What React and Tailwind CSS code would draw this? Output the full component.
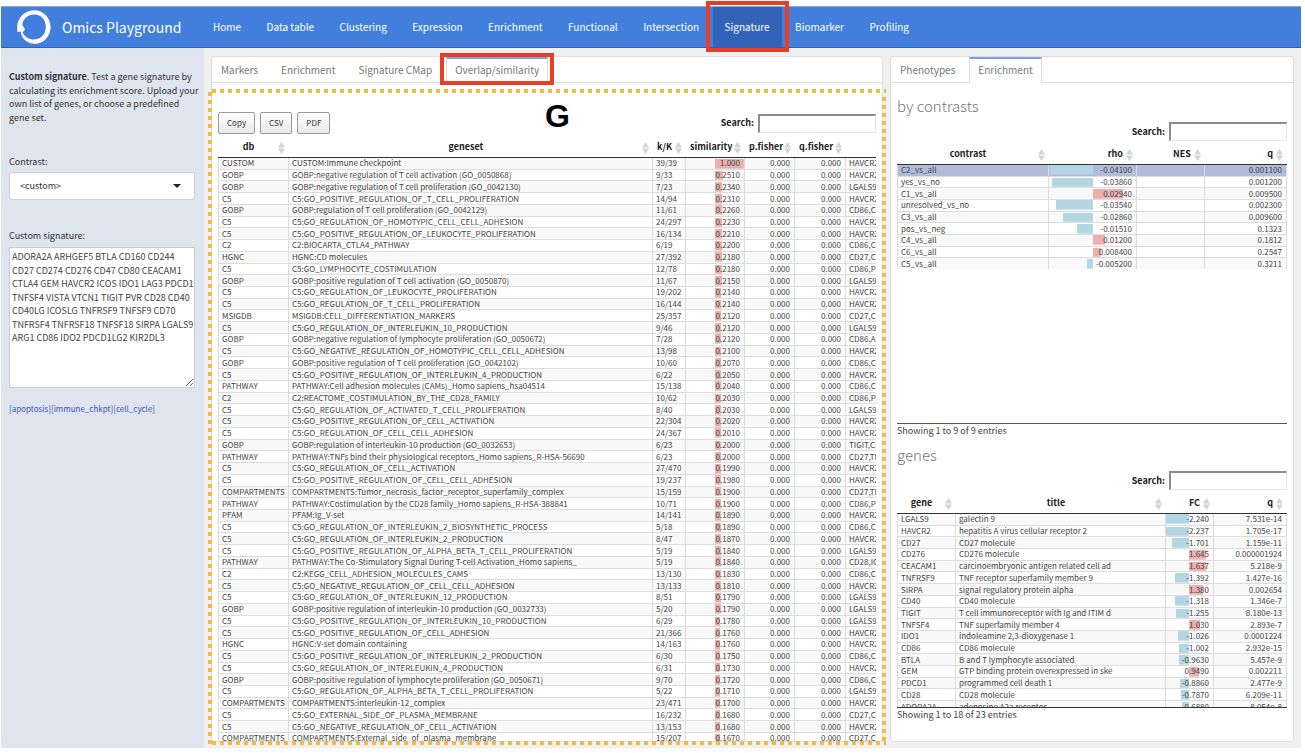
import React from "react";

const NAV = ["Home", "Data table", "Clustering", "Expression", "Enrichment", "Functional", "Intersection", "Signature", "Biomarker", "Profiling"];

const GENESETS = `CUSTOM|CUSTOM:Immune checkpoint|39/39|1.000|HAVCR2
GOBP|GOBP:negative regulation of T cell activation (GO_0050868)|9/33|0.2510|HAVCR2
GOBP|GOBP:negative regulation of T cell proliferation (GO_0042130)|7/23|0.2340|LGALS9
C5|C5:GO_POSITIVE_REGULATION_OF_T_CELL_PROLIFERATION|14/94|0.2310|HAVCR2
GOBP|GOBP:regulation of T cell proliferation (GO_0042129)|11/61|0.2260|CD86,C
C5|C5:GO_REGULATION_OF_HOMOTYPIC_CELL_CELL_ADHESION|24/297|0.2230|HAVCR2
C5|C5:GO_POSITIVE_REGULATION_OF_LEUKOCYTE_PROLIFERATION|16/134|0.2210|HAVCR2
C2|C2:BIOCARTA_CTLA4_PATHWAY|6/19|0.2200|CD86,C
HGNC|HGNC:CD molecules|27/392|0.2180|CD27,C
C5|C5:GO_LYMPHOCYTE_COSTIMULATION|12/78|0.2180|CD86,P
GOBP|GOBP:positive regulation of T cell activation (GO_0050870)|11/67|0.2150|LGALS9
C5|C5:GO_REGULATION_OF_LEUKOCYTE_PROLIFERATION|19/202|0.2140|HAVCR2
C5|C5:GO_REGULATION_OF_T_CELL_PROLIFERATION|16/144|0.2140|HAVCR2
MSIGDB|MSIGDB:CELL_DIFFERENTIATION_MARKERS|25/357|0.2120|CD27,C
C5|C5:GO_REGULATION_OF_INTERLEUKIN_10_PRODUCTION|9/46|0.2120|LGALS9
GOBP|GOBP:negative regulation of lymphocyte proliferation (GO_0050672)|7/28|0.2120|CD86,A
C5|C5:GO_NEGATIVE_REGULATION_OF_HOMOTYPIC_CELL_CELL_ADHESION|13/98|0.2100|HAVCR2
GOBP|GOBP:positive regulation of T cell proliferation (GO_0042102)|10/60|0.2070|CD86,C
C5|C5:GO_POSITIVE_REGULATION_OF_INTERLEUKIN_4_PRODUCTION|6/22|0.2050|HAVCR2
PATHWAY|PATHWAY:Cell adhesion molecules (CAMs)_Homo sapiens_hsa04514|15/138|0.2040|CD86,C
C2|C2:REACTOME_COSTIMULATION_BY_THE_CD28_FAMILY|10/62|0.2030|CD86,P
C5|C5:GO_REGULATION_OF_ACTIVATED_T_CELL_PROLIFERATION|8/40|0.2030|LGALS9
C5|C5:GO_POSITIVE_REGULATION_OF_CELL_ACTIVATION|22/304|0.2020|HAVCR2
C5|C5:GO_REGULATION_OF_CELL_CELL_ADHESION|24/367|0.2010|HAVCR2
GOBP|GOBP:regulation of interleukin-10 production (GO_0032653)|6/23|0.2000|TIGIT,CD
PATHWAY|PATHWAY:TNFs bind their physiological receptors_Homo sapiens_R-HSA-56690|6/23|0.2000|CD27,TN
C5|C5:GO_REGULATION_OF_CELL_ACTIVATION|27/470|0.1990|HAVCR2
C5|C5:GO_POSITIVE_REGULATION_OF_CELL_CELL_ADHESION|19/237|0.1980|HAVCR2
COMPARTMENTS|COMPARTMENTS:Tumor_necrosis_factor_receptor_superfamily_complex|15/159|0.1900|CD27,TN
PATHWAY|PATHWAY:Costimulation by the CD28 family_Homo sapiens_R-HSA-388841|10/71|0.1900|CD86,P
PFAM|PFAM:Ig_V-set|14/141|0.1890|HAVCR2
C5|C5:GO_REGULATION_OF_INTERLEUKIN_2_BIOSYNTHETIC_PROCESS|5/18|0.1890|CD86,C
C5|C5:GO_REGULATION_OF_INTERLEUKIN_2_PRODUCTION|8/47|0.1870|HAVCR2
C5|C5:GO_POSITIVE_REGULATION_OF_ALPHA_BETA_T_CELL_PROLIFERATION|5/19|0.1840|LGALS9
PATHWAY|PATHWAY:The Co-Stimulatory Signal During T-cell Activation_Homo sapiens_|5/19|0.1840|CD28,IC
C2|C2:KEGG_CELL_ADHESION_MOLECULES_CAMS|13/130|0.1830|CD86,C
C5|C5:GO_NEGATIVE_REGULATION_OF_CELL_CELL_ADHESION|13/133|0.1810|HAVCR2
C5|C5:GO_REGULATION_OF_INTERLEUKIN_12_PRODUCTION|8/51|0.1790|LGALS9
GOBP|GOBP:positive regulation of interleukin-10 production (GO_0032733)|5/20|0.1790|LGALS9
C5|C5:GO_POSITIVE_REGULATION_OF_INTERLEUKIN_10_PRODUCTION|6/29|0.1780|LGALS9
C5|C5:GO_POSITIVE_REGULATION_OF_CELL_ADHESION|21/366|0.1760|HAVCR2
HGNC|HGNC:V-set domain containing|14/163|0.1760|HAVCR2
C5|C5:GO_POSITIVE_REGULATION_OF_INTERLEUKIN_2_PRODUCTION|6/30|0.1750|CD86,C
C5|C5:GO_REGULATION_OF_INTERLEUKIN_4_PRODUCTION|6/31|0.1730|HAVCR2
GOBP|GOBP:positive regulation of lymphocyte proliferation (GO_0050671)|9/70|0.1720|CD86,C
C5|C5:GO_REGULATION_OF_ALPHA_BETA_T_CELL_PROLIFERATION|5/22|0.1710|LGALS9
COMPARTMENTS|COMPARTMENTS:interleukin-12_complex|23/471|0.1700|HAVCR2
C5|C5:GO_EXTERNAL_SIDE_OF_PLASMA_MEMBRANE|16/232|0.1680|CD27,C
C5|C5:GO_NEGATIVE_REGULATION_OF_CELL_ACTIVATION|13/153|0.1680|HAVCR2
COMPARTMENTS|COMPARTMENTS:External_side_of_plasma_membrane|15/207|0.1670|CD27,C`
  .split("\n")
  .map((line) => {
    const [db, set, ratio, sim, genes] = line.split("|");
    return [db, set, ratio, sim, "0.000", "0.000", genes];
  });

const CONTRASTS = [
  ["C2_vs_all", "-0.04100", "", "0.001100"],
  ["yes_vs_no", "-0.03860", "", "0.001200"],
  ["C1_vs_all", "0.02940", "", "0.009500"],
  ["unresolved_vs_no", "-0.03540", "", "0.002300"],
  ["C3_vs_all", "-0.02860", "", "0.009600"],
  ["pos_vs_neg", "-0.01510", "", "0.1323"],
  ["C4_vs_all", "0.01200", "", "0.1812"],
  ["C6_vs_all", "0.008400", "", "0.2547"],
  ["C5_vs_all", "-0.005200", "", "0.3211"],
];

const GENES = [
  ["LGALS9", "galectin 9", "-2.240", "7.531e-14"],
  ["HAVCR2", "hepatitis A virus cellular receptor 2", "-2.237", "1.705e-17"],
  ["CD27", "CD27 molecule", "-1.701", "1.159e-11"],
  ["CD276", "CD276 molecule", "1.645", "0.000001924"],
  ["CEACAM1", "carcinoembryonic antigen related cell ad", "1.637", "5.218e-9"],
  ["TNFRSF9", "TNF receptor superfamily member 9", "-1.392", "1.427e-16"],
  ["SIRPA", "signal regulatory protein alpha", "1.380", "0.002654"],
  ["CD40", "CD40 molecule", "-1.318", "1.346e-7"],
  ["TIGIT", "T cell immunoreceptor with Ig and ITIM d", "-1.255", "8.180e-13"],
  ["TNFSF4", "TNF superfamily member 4", "1.030", "2.893e-7"],
  ["IDO1", "indoleamine 2,3-dioxygenase 1", "-1.026", "0.0001224"],
  ["CD86", "CD86 molecule", "-1.002", "2.932e-15"],
  ["BTLA", "B and T lymphocyte associated", "-0.9630", "5.457e-9"],
  ["GEM", "GTP binding protein overexpressed in ske", "0.9490", "0.002211"],
  ["PDCD1", "programmed cell death 1", "-0.8860", "2.477e-9"],
  ["CD28", "CD28 molecule", "-0.7870", "6.209e-11"],
  ["ADORA2A", "adenosine A2a receptor", "-0.6880", "8.054e-8"],
];

const SIGNATURE = `ADORA2A ARHGEF5 BTLA CD160 CD244
CD27 CD274 CD276 CD47 CD80 CEACAM1
CTLA4 GEM HAVCR2 ICOS IDO1 LAG3 PDCD1
TNFSF4 VISTA VTCN1 TIGIT PVR CD28 CD40
CD40LG ICOSLG TNFRSF9 TNFSF9 CD70
TNFRSF4 TNFRSF18 TNFSF18 SIRPA LGALS9
ARG1 CD86 IDO2 PDCD1LG2 KIR2DL3`;

// Bar that grows from the middle of the cell: blue to the left, red to the right.
function barStyle(value, max) {
  const size = (Math.abs(value) / max) * 50;
  const image =
    value < 0
      ? `linear-gradient(90deg, transparent ${50 - size}%, #b3d6e2 ${50 - size}%, #b3d6e2 50%, transparent 50%)`
      : `linear-gradient(90deg, transparent 50%, #ebafb0 50%, #ebafb0 ${50 + size}%, transparent ${50 + size}%)`;
  return { backgroundImage: image, backgroundSize: "98% 88%", backgroundRepeat: "no-repeat", backgroundPosition: "center" };
}

function SortIcon() {
  return (
    <svg viewBox="0 0 7 12" className="absolute top-1/2 right-1 h-3 w-[7px] -translate-y-1/2" aria-hidden="true">
      <path d="M3.5 0 L7 5.6 H0 Z M3.5 12 L7 6.4 H0 Z" fill="#d4d4d4" />
    </svg>
  );
}

function DataTable({ columns, rows, selected, className }) {
  return (
    <table className={"w-full table-fixed border-separate border-spacing-0 text-[8px] leading-[10px] text-[#444] " + className}>
      <colgroup>
        {columns.map((c, i) => (
          <col key={i} className={c.width} />
        ))}
      </colgroup>
      <thead>
        <tr className="h-[19px]">
          {columns.map((c, i) => (
            <th
              key={i}
              scope="col"
              className={
                "relative border-b border-[#333] p-0 pr-[14px] pb-0.5 pl-1 text-[9px] leading-[14px] font-bold whitespace-nowrap text-[#222] " +
                (c.num ? "text-right" : "text-center")
              }
            >
              {c.name}
              {c.name && <SortIcon />}
            </th>
          ))}
        </tr>
      </thead>
      <tbody>
        {rows.map((row, r) => (
          <tr key={r} className={r === selected ? "bg-[#b0bcd9]" : r % 2 === 0 ? "bg-[#f9f9f9]" : "bg-white"}>
            {row.map((cell, i) => (
              <td
                key={i}
                style={columns[i].max ? barStyle(parseFloat(cell), columns[i].max) : undefined}
                className={
                  "overflow-hidden border-[#dcdcdc] p-0 whitespace-nowrap " +
                  (r > 0 ? "border-t " : "") +
                  (i === 0 ? "border-l " : "") +
                  (i === row.length - 1 && columns[i].open ? "" : "border-r ") +
                  (columns[i].num ? "pr-1 text-right" : "pl-[3px]")
                }
              >
                {cell}
              </td>
            ))}
          </tr>
        ))}
      </tbody>
    </table>
  );
}

function Search({ id }) {
  return (
    <div className="flex items-center gap-1">
      <label htmlFor={id} className="text-[9px] leading-[14px] font-bold text-[#222]">
        Search:
      </label>
      <input
        id={id}
        type="search"
        className="h-[19px] w-[118px] border-t-2 border-r border-b border-l-2 border-t-[#8c8c8c] border-r-[#e4e4e4] border-b-[#e4e4e4] border-l-[#8c8c8c] bg-white px-1 text-[9px] outline-none"
      />
    </div>
  );
}

function Tabs({ items, active, marked }) {
  return (
    <div role="tablist" className="flex h-[26px] shrink-0 gap-[5px] border-b border-[#ddd]">
      {items.map((t) => (
        <button
          key={t}
          type="button"
          role="tab"
          aria-selected={t === active}
          className={
            "relative -mb-px border-x px-2 text-[10px] leading-[14px] whitespace-nowrap text-[#777] " +
            (t === active ? "border-t-2 border-x-[#ddd] border-t-[#7aa3e5] bg-white pb-0.5" : "border-x-transparent")
          }
        >
          {t}
          {t === marked && <span className="absolute -inset-x-[7px] -top-[6px] -bottom-[2px] border-4 border-[#e93d25]" />}
        </button>
      ))}
    </div>
  );
}

const GENESET_COLS = [
  { name: "db", width: "w-[71px]" },
  { name: "geneset", width: "w-auto" },
  { name: "k/K", width: "w-[33px]" },
  { name: "similarity", width: "w-[59px]", num: true, max: 1 },
  { name: "p.fisher", width: "w-[50px]", num: true },
  { name: "q.fisher", width: "w-[51px]", num: true },
  { name: "", width: "w-[30px]", open: true },
];

const CONTRAST_COLS = [
  { name: "contrast", width: "w-auto" },
  { name: "rho", width: "w-[88px]", num: true, max: 0.041 },
  { name: "NES", width: "w-[68px]", num: true },
  { name: "q", width: "w-[82px]", num: true },
];

const GENE_COLS = [
  { name: "gene", width: "w-[59px]" },
  { name: "title", width: "w-auto" },
  { name: "FC", width: "w-[48px]", num: true, max: 2.24 },
  { name: "q", width: "w-[73px]", num: true },
];

function Logo() {
  return (
    <svg viewBox="0 0 36 36" className="h-9 w-9" aria-hidden="true">
      <path
        fill="#fff"
        fillRule="evenodd"
        d="M17.8 1.2 C26.8 0.9 34.6 8.6 34.6 18 C34.6 27.2 27.8 34.8 18.6 34.8 C12.6 34.8 7.4 31 5.4 26 L4.9 22.8 L1.2 22.8 L1.2 17.6 C1.4 8.8 8.6 1.4 17.8 1.2 Z M18.4 5.4 C11.6 5.4 7 10.2 6.2 15.4 L9 20.6 L6.6 23.4 C8.6 27.8 12.8 30.4 18.2 30.4 C25.2 30.4 29.8 25 29.8 17.8 C29.8 10.6 25.2 5.4 18.4 5.4 Z"
      />
    </svg>
  );
}

export default function App() {
  return (
    <div className="flex h-screen flex-col bg-white pt-[6px] pr-1 pb-[5px] pl-px font-['Noto_Sans_CJK_JP','Noto_Sans',sans-serif]">
      <header className="flex h-[42px] shrink-0 items-stretch border-t border-b border-t-[#8fa9cf] border-b-[#2f62bd] bg-[#427fdd] text-white">
        <a href="#home" className="flex w-[200px] shrink-0 items-center gap-[10px] pl-[15px]">
          <Logo />
          <span className="text-[14px] leading-5">Omics Playground</span>
        </a>
        <nav className="flex w-[720px] items-stretch justify-between">
          {NAV.map((n) => (
            <a
              key={n}
              href={"#" + n.toLowerCase().replace(" ", "-")}
              className={"relative flex items-center px-3 pb-px text-[10px] leading-[14px] whitespace-nowrap " + (n === "Signature" ? "bg-[#3163b8]" : "")}
            >
              {n}
              {n === "Signature" && <span className="absolute -inset-x-[7px] -top-[6px] -bottom-[5px] border-4 border-[#e93d25]" />}
            </a>
          ))}
        </nav>
      </header>

      <div className="flex min-h-0 flex-1 bg-[#f0f0f0]">
        <aside className="flex w-[203px] shrink-0 flex-col bg-[#dfe5ef] pt-[22px] pr-[9px] pl-2 text-[9px] leading-normal text-[#333]">
          <p className="mb-[31px] h-[54px] whitespace-nowrap">
            <strong>Custom signature</strong>. Test a gene signature by
            <br />
            calculating its enrichment score. Upload your
            <br />
            own list of genes, or choose a predefined
            <br />
            gene set.
          </p>
          <label htmlFor="contrast">Contrast:</label>
          <div className="relative mt-[3px] mb-[29px]">
            <select
              id="contrast"
              className="block h-7 w-full appearance-none rounded-[3px] border border-[#ccc] bg-white px-[10px] text-[9px] leading-[14px] text-[#333] outline-none"
            >
              <option>&lt;custom&gt;</option>
            </select>
            <svg viewBox="0 0 8 4" className="pointer-events-none absolute top-3 right-[14px] h-1 w-2" aria-hidden="true">
              <path d="M0 0 H8 L4 4 Z" fill="#222" />
            </svg>
          </div>
          <label htmlFor="signature">Custom signature:</label>
          <textarea
            id="signature"
            defaultValue={SIGNATURE}
            className="mt-[5px] block h-[141px] w-full shrink-0 resize overflow-hidden border border-[#ccc] bg-white px-0.5 py-0.5 text-[9px] leading-normal whitespace-pre text-[#444] outline-none"
          />
          <p className="mt-[14px] text-[8px] leading-[14px] text-[#3d50b5]">
            <a href="#apoptosis">[apoptosis]</a>
            <a href="#immune_chkpt">[immune_chkpt]</a>
            <a href="#cell_cycle">[cell_cycle]</a>
          </p>
        </aside>

        <main className="flex min-w-0 flex-1 gap-[7px] pt-2 pr-[7px] pb-[6px] pl-[7px]">
          <section className="relative flex min-w-0 flex-1 flex-col rounded-[3px] border border-[#ddd] bg-white">
            <Tabs items={["Markers", "Enrichment", "Signature CMap", "Overlap/similarity"]} active="Overlap/similarity" marked="Overlap/similarity" />
            <div className="flex min-h-0 flex-1 flex-col px-[6px] pt-[29px]">
              <div className="mb-[5px] flex items-center justify-between">
                <div className="flex gap-[5px]">
                  {["Copy", "CSV", "PDF"].map((b) => (
                    <button
                      key={b}
                      type="button"
                      className="h-[22px] rounded-[2px] border border-[#999] bg-linear-to-b from-white to-[#e9e9e9] px-2 text-[8px] leading-[14px] text-[#333]"
                    >
                      {b}
                    </button>
                  ))}
                </div>
                <Search id="search-genesets" />
              </div>
              <div className="min-h-0 flex-1 overflow-hidden">
                <DataTable columns={GENESET_COLS} rows={GENESETS} className="h-[605px]" />
              </div>
            </div>
            <div className="pointer-events-none absolute top-[47px] left-[333px] font-['Liberation_Sans',sans-serif] text-[32px] leading-6 font-bold text-black">G</div>
            <div className="absolute top-[32px] -right-1 left-0 h-1 bg-[repeating-linear-gradient(90deg,#efbb42_0_4px,transparent_4px_8px)]" />
            <div className="absolute -right-1 -bottom-1 left-0 h-1 bg-[repeating-linear-gradient(90deg,#efbb42_0_4px,transparent_4px_8px)]" />
            <div className="absolute top-[35px] -bottom-1 -left-1 w-1 bg-[repeating-linear-gradient(180deg,#efbb42_0_4px,transparent_4px_8px)]" />
            <div className="absolute top-[40px] -right-1 -bottom-1 w-1 bg-[repeating-linear-gradient(180deg,#efbb42_0_4px,transparent_4px_8px)]" />
          </section>

          <section className="flex w-[404px] shrink-0 flex-col rounded-[3px] border border-[#ddd] bg-white">
            <Tabs items={["Phenotypes", "Enrichment"]} active="Enrichment" />
            <div className="flex flex-col px-[6px] pt-[13px]">
              <h2 className="text-[15px] leading-5 font-light text-[#777]">by contrasts</h2>
              <div className="mt-[6px] mb-[5px] flex justify-end">
                <Search id="search-contrasts" />
              </div>
              <div className="h-[278px] overflow-hidden border-b border-[#555]">
                <DataTable columns={CONTRAST_COLS} rows={CONTRASTS} selected={0} className="h-[123px]" />
              </div>
              <p className="text-[9px] leading-[14px] text-[#444]">Showing 1 to 9 of 9 entries</p>
              <h2 className="mt-[7px] text-[15px] leading-5 font-light text-[#777]">genes</h2>
              <div className="mt-[6px] mb-[5px] flex justify-end">
                <Search id="search-genes" />
              </div>
              <div className="h-[213px] overflow-hidden border-b border-[#333]">
                <DataTable columns={GENE_COLS} rows={GENES} className="h-[217px]" />
              </div>
              <p className="text-[9px] leading-[14px] text-[#444]">Showing 1 to 18 of 23 entries</p>
            </div>
          </section>
        </main>
      </div>
    </div>
  );
}
